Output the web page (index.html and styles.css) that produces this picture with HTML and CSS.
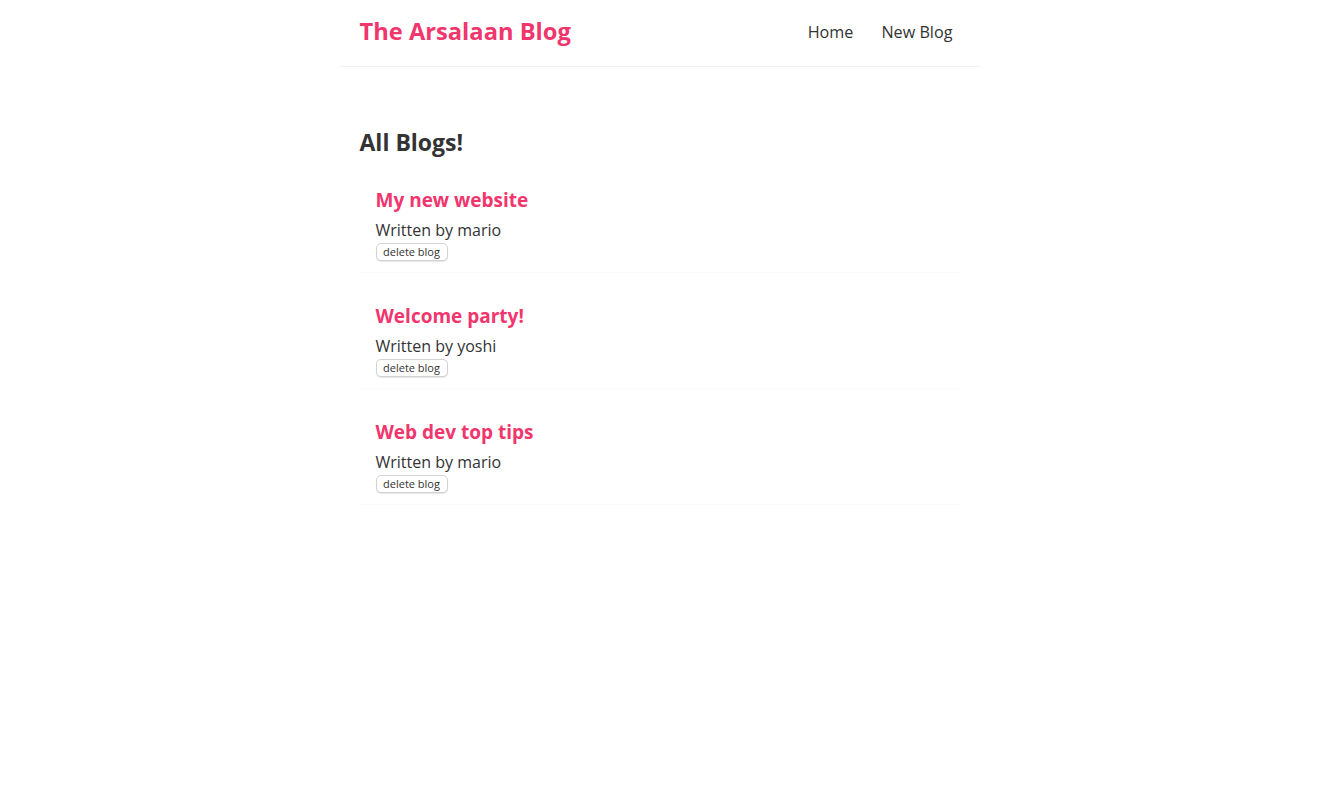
FILE: index.html
```html
<!DOCTYPE html>
<html lang="en">
<head>
<meta charset="utf-8">
<title>The Arsalaan Blog</title>
<link rel="stylesheet" href="styles.css">
</head>
<body>
<div class="app">
  <nav class="navbar">
    <h1 class="brand">The Arsalaan Blog</h1>
    <div class="links">
      <a href="#" class="link">Home</a>
      <a href="#" class="link">New Blog</a>
    </div>
  </nav>
  <main class="content">
    <h2 class="page-title">All Blogs!</h2>
    <div class="blog-list">
      <div class="blog-preview">
        <h2 class="blog-title">My new website</h2>
        <p class="blog-author">Written by mario</p>
        <button class="delete-btn">delete blog</button>
      </div>
      <div class="blog-preview">
        <h2 class="blog-title">Welcome party!</h2>
        <p class="blog-author">Written by yoshi</p>
        <button class="delete-btn">delete blog</button>
      </div>
      <div class="blog-preview">
        <h2 class="blog-title">Web dev top tips</h2>
        <p class="blog-author">Written by mario</p>
        <button class="delete-btn">delete blog</button>
      </div>
    </div>
  </main>
</div>
</body>
</html>
```

FILE: styles.css
```css
* {
  margin: 0;
  box-sizing: border-box;
}
body {
  margin: 0;
  background: #fff;
  font-family: "Open Sans", "Noto Sans", sans-serif;
  color: #333;
}
.navbar {
  max-width: 640px;
  margin: 0 auto;
  padding: 0 20px;
  height: 67px;
  display: flex;
  align-items: center;
  border-bottom: 1px solid #f2f2f2;
}
.brand {
  font-size: 23.7px;
  font-weight: 700;
  line-height: 30px;
  color: #f1356d;
  padding-bottom: 4px;
}
.links {
  margin-left: auto;
  display: flex;
  gap: 28px;
  padding-right: 7px;
  padding-bottom: 3px;
}
.link {
  font-size: 16.2px;
  color: #333;
  text-decoration: none;
}
.content {
  max-width: 640px;
  margin: 0 auto;
  padding: 60px 20px 20px;
}
.page-title {
  font-size: 23px;
  font-weight: 700;
  line-height: 30px;
  color: #333;
}
.blog-list {
  display: flex;
  flex-direction: column;
  gap: 19px;
  margin-top: 19px;
}
.blog-preview {
  padding: 12px 16px 11px;
  border-bottom: 1px solid #fafafa;
}
.blog-title {
  font-size: 19px;
  font-weight: 700;
  line-height: 25px;
  color: #f1356d;
  margin-bottom: 6px;
}
.blog-author {
  font-size: 16px;
  line-height: 22px;
  color: #333;
}
.delete-btn {
  display: block;
  margin-top: 2px;
  font-family: "Open Sans", "Noto Sans", sans-serif;
  font-size: 11px;
  line-height: 14px;
  white-space: nowrap;
  color: #333;
  background: #fff;
  border: 1px solid #d2d2d2;
  border-radius: 5px;
  box-shadow: 0 1px 1px rgba(0,0,0,0.1);
  padding: 1px 0;
  height: 18px;
  width: 72px;
  text-align: center;
}
```
